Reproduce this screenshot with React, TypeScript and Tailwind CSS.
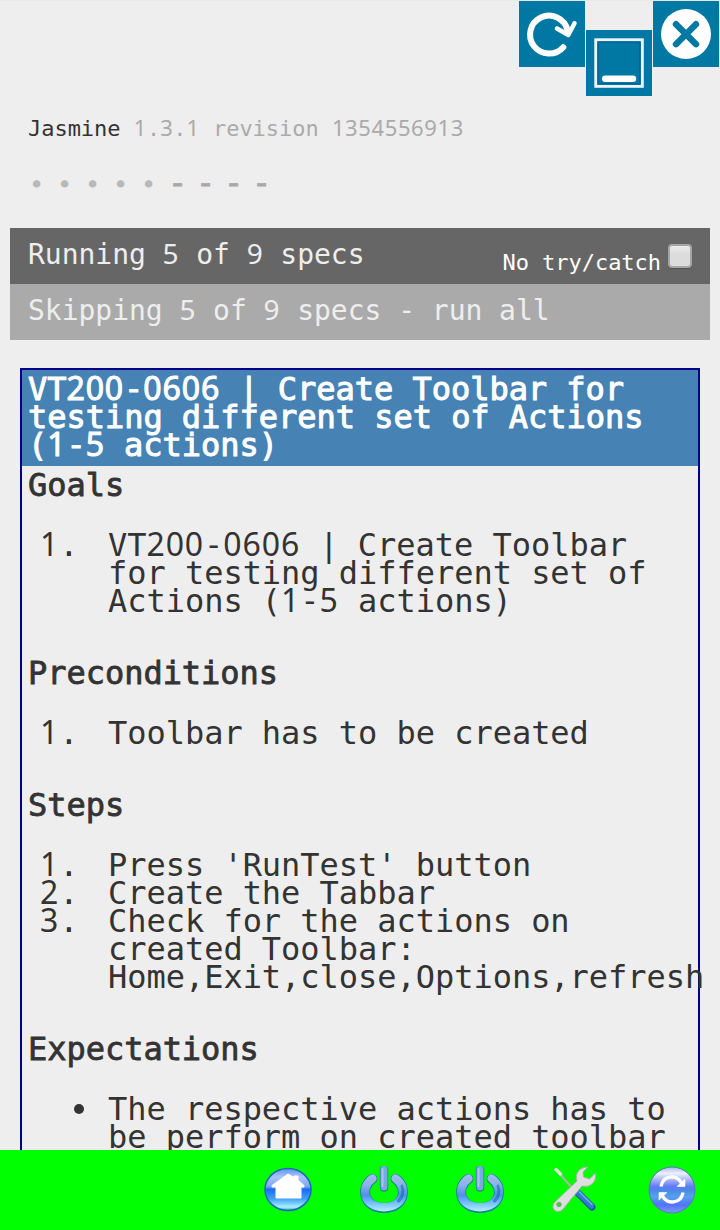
import React from "react";

/* Digits are set in a face with a plain zero, spaced to the monospace pitch. */
function Mono({ text }: { text: string }) {
  return (
    <>
      {text.split(/(\d+)/).map((part, i) =>
        /^\d+$/.test(part) ? (
          <span key={i} className="font-['Noto_Sans',sans-serif] leading-[0] tracking-[0.028em]">
            {part}
          </span>
        ) : (
          part
        ),
      )}
    </>
  );
}

function Lines({ lines }: { lines: string[] }) {
  return (
    <>
      {lines.map((line) => (
        <span key={line} className="block h-7">
          <Mono text={line} />
        </span>
      ))}
    </>
  );
}

function Heading({ children }: { children: React.ReactNode }) {
  return <h3 className="h-7 pl-[6px] [-webkit-text-stroke:0.8px_#333]">{children}</h3>;
}

function NumberedList({ items }: { items: string[][] }) {
  return (
    <ol className="mt-8 mb-11">
      {items.map((lines, i) => (
        <li key={i} className="flex">
          <span className="w-[86px] shrink-0 pl-[18px]">
            <Mono text={`${i + 1}.`} />
          </span>
          <div>
            <Lines lines={lines} />
          </div>
        </li>
      ))}
    </ol>
  );
}

function RefreshTile() {
  return (
    <svg width="66" height="66" viewBox="0 0 66 66" className="bg-[#0078a4]" fill="none" stroke="#fff" strokeLinecap="round" strokeLinejoin="round">
      <path d="M44.3 46.2A19 19 0 1 1 48.5 29" strokeWidth="6" />
      <path d="M38 27.5L49.3 34L55.5 22.3" strokeWidth="4.5" />
      <path d="M46 28L49.3 34L52.5 28Z" fill="#fff" strokeWidth="2" />
    </svg>
  );
}

function MinimizeTile() {
  return (
    <svg width="66" height="66" viewBox="0 0 66 66" className="mt-[29px] bg-[#0078a4]" fill="none">
      <rect x="9.8" y="9.8" width="46.5" height="46.5" stroke="#e9f5fa" strokeWidth="3" />
      <rect x="12.2" y="12.2" width="41.7" height="41.7" stroke="#00639a" strokeWidth="1.6" />
      <path d="M19.2 48.7H47" stroke="#fff" strokeWidth="6.4" strokeLinecap="round" />
    </svg>
  );
}

function CloseTile() {
  return (
    <svg width="66" height="66" viewBox="0 0 66 66" className="bg-[#0078a4]">
      <circle cx="33" cy="33" r="25" fill="#fff" />
      <path d="M23 23.2L43 43.2M43 23.2L23 43.2" stroke="#0078a4" strokeWidth="6.4" strokeLinecap="round" />
    </svg>
  );
}

function HomeIcon() {
  return (
    <svg width="48" height="48" viewBox="0 0 48 48">
      <defs>
        <linearGradient id="homeFill" x1="0" y1="0" x2="0" y2="1">
          <stop offset="0" stopColor="#5c94f5" />
          <stop offset="0.2" stopColor="#a9c4fa" />
          <stop offset="0.42" stopColor="#7da7fb" />
          <stop offset="0.5" stopColor="#1b6cf5" />
          <stop offset="0.72" stopColor="#3fa0f8" />
          <stop offset="0.92" stopColor="#a8f3ff" />
          <stop offset="1" stopColor="#2a9fca" />
        </linearGradient>
      </defs>
      <ellipse cx="24" cy="23.5" rx="23" ry="21" fill="url(#homeFill)" stroke="#1d67b8" strokeWidth="1.5" />
      <path d="M24 8L30 11.5V10H34V14L40 19.5V21H37V32H12V21H8V19.5Z" fill="#fff" stroke="#fff" strokeWidth="1" strokeLinejoin="round" />
    </svg>
  );
}

function PowerIcon({ id }: { id: string }) {
  return (
    <svg width="48" height="48" viewBox="0 0 48 48" fill="none" strokeLinecap="round">
      <defs>
        <linearGradient id={id} gradientUnits="userSpaceOnUse" x1="0" y1="4" x2="0" y2="46">
          <stop offset="0" stopColor="#a3c1e9" />
          <stop offset="0.35" stopColor="#8db4e6" />
          <stop offset="0.6" stopColor="#4c93e2" />
          <stop offset="0.8" stopColor="#79c4ff" />
          <stop offset="1" stopColor="#b8f4ff" />
        </linearGradient>
      </defs>
      <path d="M12.5 12.8C0 21 3 41.5 24 42C45 41.5 48 21 35.5 12.8" stroke="#197d9f" strokeWidth="10" />
      <path d="M12.5 12.5C0 21 3 41 24 41.2C45 41 48 21 35.5 12.5" stroke={`url(#${id})`} strokeWidth="8.4" />
      <path d="M24 3.5V21.5" stroke="#1b7b9b" strokeWidth="8.5" />
      <path d="M24 3V21" stroke="#7ba8df" strokeWidth="7" />
      <path d="M22.5 3V20" stroke="#a8c5eb" strokeWidth="2" />
      <path d="M42 20C44.5 26 42 32 38.5 35" stroke="#1763c6" strokeWidth="3" opacity="0.6" />
    </svg>
  );
}

function ToolsIcon() {
  return (
    <svg width="48" height="48" viewBox="0 0 48 48" fill="none" strokeLinecap="round">
      <path d="M5 5L23 25" stroke="#a9b6a6" strokeWidth="2.2" />
      <path d="M4 3.5L8.5 8" stroke="#dce5dc" strokeWidth="3.4" />
      <path d="M26 27L40 41" stroke="#1551a5" strokeWidth="7" />
      <path d="M26 26.5L39.5 40" stroke="#317bd0" strokeWidth="5.5" />
      <path d="M27.5 26L40 38.5" stroke="#72b1eb" strokeWidth="1.5" />
      <path
        d="M35.5 1C28 1 22.5 7 25 15L3 36C-3 43 6 49 11 43L30 20C38 22 45 16 43.5 7L37.5 13L31.5 11L31 6.5Z"
        fill="#dedede"
        stroke="#a9b3a7"
        strokeWidth="1"
        strokeLinejoin="round"
      />
      <circle cx="7" cy="38.5" r="2.3" fill="#1be41b" stroke="#8c9b8a" strokeWidth="0.8" />
    </svg>
  );
}

function SyncIcon() {
  return (
    <svg width="48" height="48" viewBox="0 0 48 48" fill="none">
      <defs>
        <linearGradient id="syncFill" x1="0" y1="0" x2="0" y2="1">
          <stop offset="0" stopColor="#a7b7ed" />
          <stop offset="0.14" stopColor="#edf2ff" />
          <stop offset="0.28" stopColor="#a7b4fa" />
          <stop offset="0.42" stopColor="#637bf6" />
          <stop offset="0.5" stopColor="#4b88e5" />
          <stop offset="0.65" stopColor="#56a2ee" />
          <stop offset="0.82" stopColor="#5471fb" />
          <stop offset="1" stopColor="#789df7" />
        </linearGradient>
      </defs>
      <circle cx="24" cy="24" r="23" fill="url(#syncFill)" stroke="#5876bd" strokeWidth="1" />
      <path d="M13 20.5C15 9 29 8 33.5 17M35 26.5C33 38 19 39 14.5 30" stroke="#fff" strokeWidth="3.4" />
      <path d="M29 20.5H37V13ZM19 26.5H11V34Z" fill="#fff" stroke="#fff" strokeWidth="0.6" />
    </svg>
  );
}

export default function App() {
  return (
    <div className="flex h-[1230px] w-[720px] flex-col overflow-hidden bg-[#eee] font-['DejaVu_Sans_Mono',monospace] tracking-[-0.002em] whitespace-pre text-[#333]">
      <main className="h-[1150px] overflow-hidden border-t border-[#e8e8e8]">
        <div className="flex h-[95px] items-start justify-end gap-px pr-px">
          <RefreshTile />
          <MinimizeTile />
          <CloseTile />
        </div>

        <div className="mt-[19px] h-7 pl-7 text-[22px] leading-7">
          Jasmine <span className="text-[#aaa]"><Mono text="1.3.1 revision 1354556913" /></span>
        </div>

        <ul className="mt-7 flex h-7 pl-[29px] text-[22px] leading-[27px] text-[#b8b8b8]">
          {[0, 1, 2, 3, 4].map((n) => (
            <li key={n} className="w-7 pl-px [-webkit-text-stroke:1px_#b8b8b8]">•</li>
          ))}
          {[5, 6, 7, 8].map((n) => (
            <li key={n} className="-ml-px w-7 mr-px text-[32px] leading-[25px] text-[#a8a8a8] [-webkit-text-stroke:0.8px_#a8a8a8]">-</li>
          ))}
        </ul>

        <div className="mx-[10px] mt-[29px] flex h-14 justify-between bg-[#666] pr-[18px] pl-[18px] text-[28px] leading-[54px] text-[#eee]">
          <span><Mono text="Running 5 of 9 specs" /></span>
          <label className="flex text-[22px] text-white">
            <span className="pt-[8px]">No try/catch</span>
            <span className="mt-4 ml-[7px] h-6 w-6 rounded-[4px] border-2 border-[#a6a6a6] bg-linear-to-b from-[#eee] to-[#dcdcdc] to-40% shadow-[0_1px_1px_#505050]" />
          </label>
        </div>
        <div className="mx-[10px] h-14 bg-[#aaa] pl-[18px] text-[28px] leading-[54px] text-[#eee]">
          <Mono text="Skipping 5 of 9 specs - run all" />
        </div>

        <section className="mx-5 mt-7 h-[900px] border-2 border-[#00008b] text-[32px] leading-7">
          <h2 className="mb-[5px] h-24 bg-[#4682b4] pt-[5px] pl-[6px] text-white [-webkit-text-stroke:1px_#fff]">
            <Lines
              lines={[
                "VT200-0606 | Create Toolbar for",
                "testing different set of Actions",
                "(1-5 actions)",
              ]}
            />
          </h2>
          <Heading>Goals</Heading>
          <NumberedList
            items={[["VT200-0606 | Create Toolbar", "for testing different set of", "Actions (1-5 actions)"]]}
          />
          <Heading>Preconditions</Heading>
          <NumberedList items={[["Toolbar has to be created"]]} />
          <Heading>Steps</Heading>
          <NumberedList
            items={[
              ["Press 'RunTest' button"],
              ["Create the Tabbar"],
              ["Check for the actions on", "created Toolbar:", "Home,Exit,close,Options,refresh"],
            ]}
          />
          <Heading>Expectations</Heading>
          <ul className="mt-8">
            <li className="flex">
              <span className="mt-[9px] mr-[24px] ml-[52px] h-[10px] w-[10px] shrink-0 rounded-full bg-[#333]" />
              <div>
                <Lines lines={["The respective actions has to", "be perform on created toolbar"]} />
              </div>
            </li>
          </ul>
        </section>
      </main>

      <nav className="flex h-20 items-center justify-end gap-12 bg-[#00ff00] pr-6">
        <HomeIcon />
        <PowerIcon id="powerA" />
        <PowerIcon id="powerB" />
        <ToolsIcon />
        <SyncIcon />
      </nav>
    </div>
  );
}
